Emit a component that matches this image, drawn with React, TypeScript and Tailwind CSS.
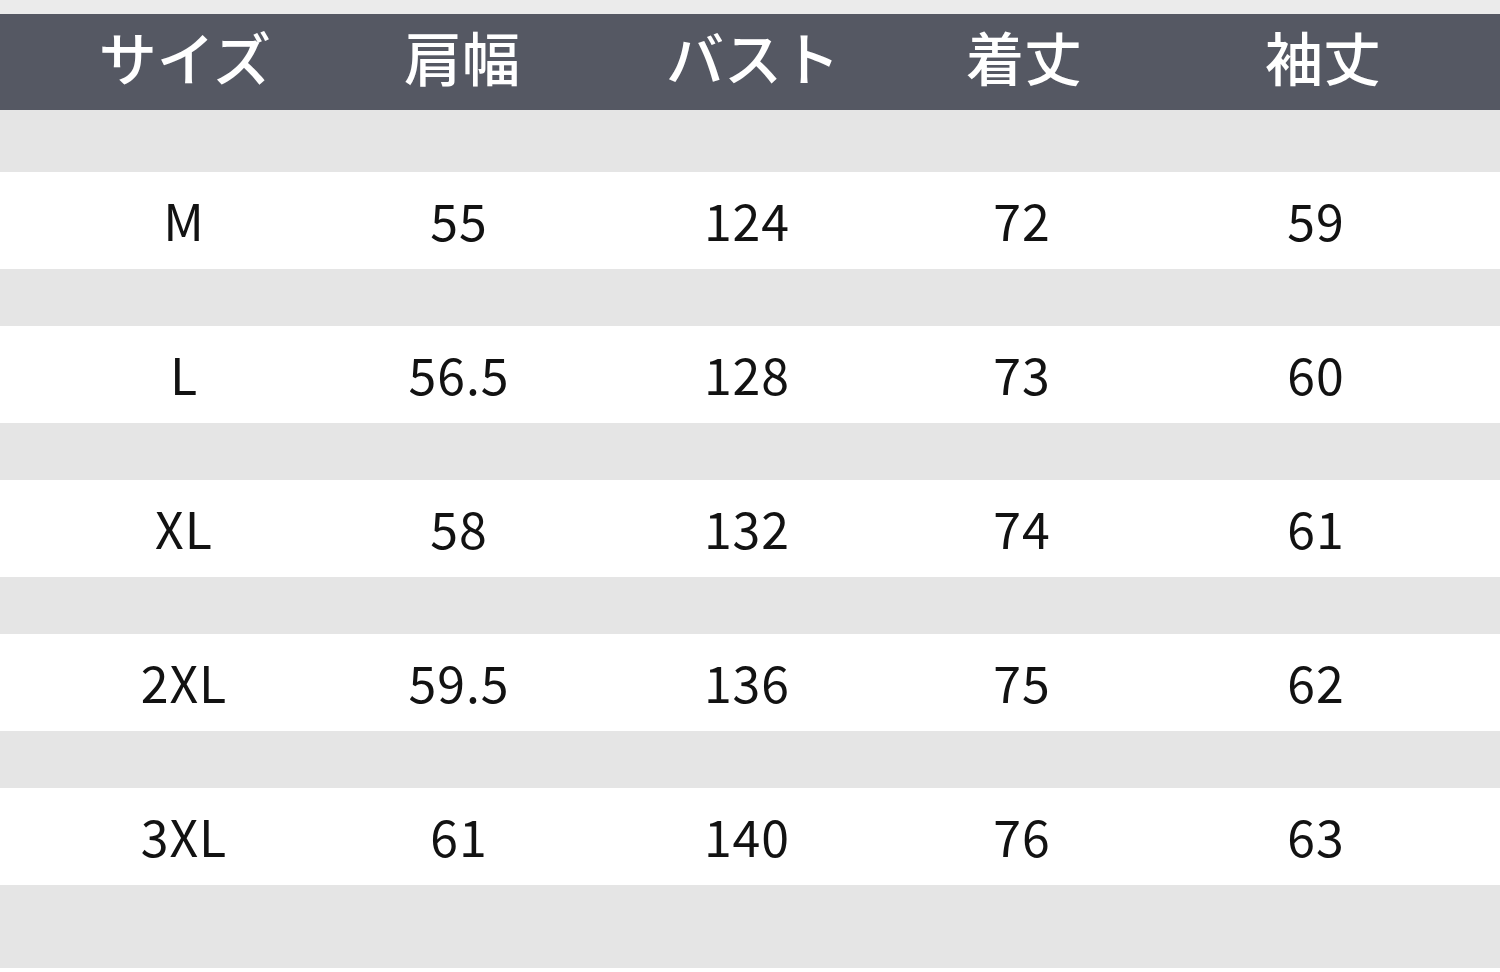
const headers = ["サイズ", "肩幅", "バスト", "着丈", "袖丈"];

const rows = [
  ["M", "55", "124", "72", "59"],
  ["L", "56.5", "128", "73", "60"],
  ["XL", "58", "132", "74", "61"],
  ["2XL", "59.5", "136", "75", "62"],
  ["3XL", "61", "140", "76", "63"],
];

// header labels sit a bit right of the value columns in the original
const headCols = "grid grid-cols-[270px_284px_298px_244px_354px] pl-[50px]";
const cols = "grid grid-cols-[270px_280px_296px_254px_334px] pl-[49px]";

export default function App() {
  return (
    <div
      className="w-[1500px] h-[972px] overflow-hidden bg-white"
      style={{ fontFamily: '"Noto Sans CJK JP", "Noto Sans", sans-serif' }}
    >
      <div className="h-[14px] bg-[#ebebeb]" />
      <div className={`${headCols} h-[96px] items-center bg-[#555863] pb-[12px] text-white`}>
        {headers.map((h) => (
          <div key={h} className="text-center text-[58px] font-medium leading-none">
            {h}
          </div>
        ))}
      </div>
      <div className="h-[62px] bg-[#e5e5e5]" />
      {rows.map((row) => (
        <div key={row[0]}>
          <div className={`${cols} h-[97px] items-center bg-white pb-[4px] text-[#121212]`}>
            {row.map((v, i) => (
              <div key={i} className="text-center text-[50px] tracking-[1px] leading-none">
                {v}
              </div>
            ))}
          </div>
          <div className={row[0] === "3XL" ? "h-[83px] bg-[#e5e5e5]" : "h-[57px] bg-[#e5e5e5]"} />
        </div>
      ))}
    </div>
  );
}
